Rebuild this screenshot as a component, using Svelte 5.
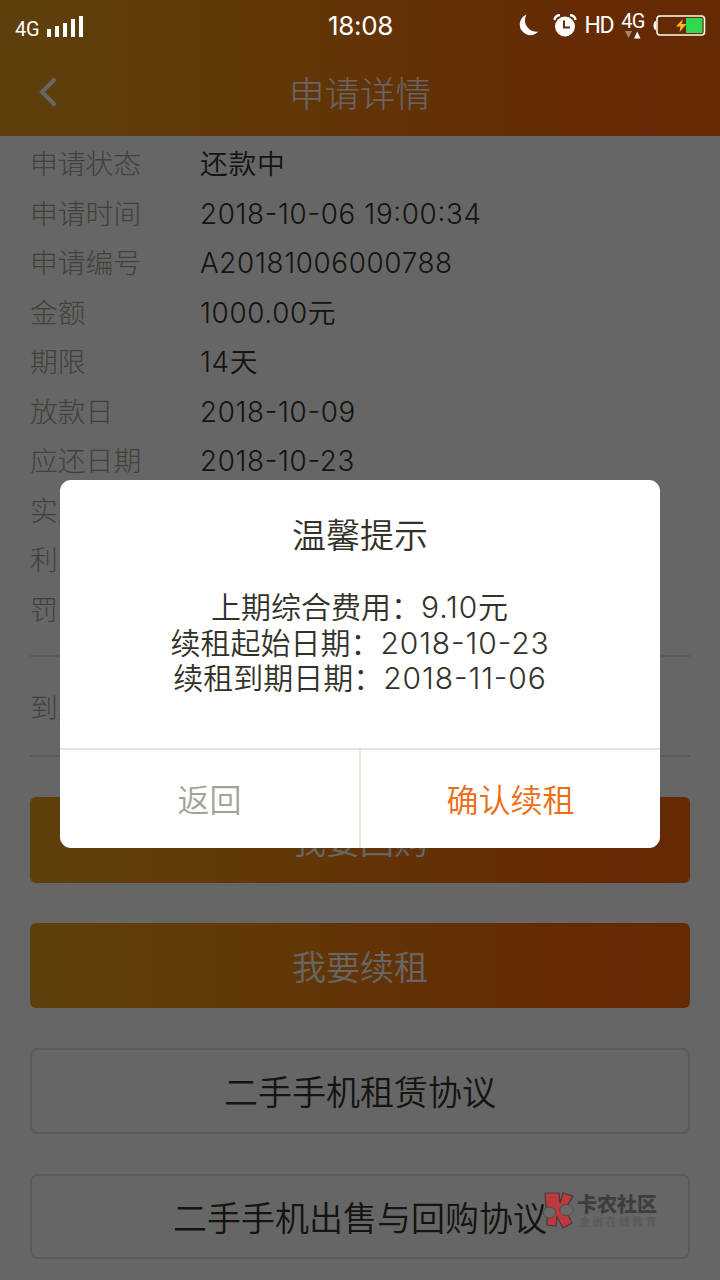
<script lang="ts">
	const rows = [
		{ label: '申请状态', value: '还款中' },
		{ label: '申请时间', value: '2018-10-06 19:00:34' },
		{ label: '申请编号', value: 'A20181006000788' },
		{ label: '金额', value: '1000.00元' },
		{ label: '期限', value: '14天' },
		{ label: '放款日', value: '2018-10-09' },
		{ label: '应还日期', value: '2018-10-23' },
		{ label: '实还日期', value: '' },
		{ label: '利息', value: '' },
		{ label: '罚息', value: '' }
	];

	const messages = [
		{ label: '上期综合费用：', value: '9.10元' },
		{ label: '续租起始日期：', value: '2018-10-23' },
		{ label: '续租到期日期：', value: '2018-11-06' }
	];

	const signalBars = [8, 11, 14, 18, 21];

	let open = $state(true);
</script>

<div class="screen">
	<div class="status-bar">
		<div class="status-left">
			<span class="network">4G</span>
			<svg class="signal" width="37" height="22" viewBox="0 0 37 22">
				{#each signalBars as height, i}
					<rect x={i * 8} y={22 - height} width="4" {height} fill="#fff" />
				{/each}
			</svg>
		</div>
		<div class="clock">18:08</div>
		<div class="status-right">
			<svg width="20" height="22" viewBox="0 0 20 22">
				<path d="M7.500 .5A10.700 10.700 0 1 0 19.500 17.500A11.500 11.500 0 0 1 7.500 .5Z" fill="#fff" />
			</svg>
			<svg class="alarm" width="24" height="23" viewBox="0 0 24 23">
				<circle cx="12" cy="12.500" r="10" fill="#fff" />
				<path d="M1.500 6Q2 1.500 7 1M22.500 6Q22 1.500 17 1" fill="none" stroke="#fff" stroke-width="2.400" />
				<path d="M11 6.500V13.500H17" fill="none" stroke="#642b06" stroke-width="2" />
			</svg>
			<span class="hd">HD</span>
			<div class="data">
				<span>4G</span>
				<svg width="16" height="8" viewBox="0 0 16 8">
					<path d="M0 0H7L3.500 7Z" fill="#a28878" />
					<path d="M9 7.500H15.500L12.200 .5Z" fill="#fff" />
				</svg>
			</div>
			<svg class="battery" width="53" height="21" viewBox="0 0 53 21">
				<path d="M3 6Q0.500 6 .5 10.500T3 15Z" fill="#fff" />
				<rect x="4" y="1" width="47.500" height="19" rx="3" fill="none" stroke="#fffbe8" stroke-width="1.600" />
				<rect x="33" y="3" width="16.500" height="15" fill="#31d651" />
				<path d="M30 4L23 11.500H27.500L26.500 17L33.500 9H28.500Z" fill="#ffb726" />
			</svg>
		</div>
	</div>

	<header>
		<svg class="back" width="20" height="30" viewBox="0 0 20 30">
			<path d="M16 3L4 15L16 27" fill="none" stroke="#fff" stroke-width="4" stroke-linecap="round" />
		</svg>
		<h1>申请详情</h1>
	</header>

	<main>
		<div class="details">
			{#each rows as row}
				<div class="row">
					<span class="label">{row.label}</span>
					<span class="value">{row.value}</span>
				</div>
			{/each}
		</div>
		<div class="row account">
			<span class="label">到账银行</span>
		</div>
		<div class="actions">
			<button class="primary">我要回购</button>
			<button class="primary" onclick={() => (open = true)}>我要续租</button>
			<button class="plain">二手手机租赁协议</button>
			<button class="plain">二手手机出售与回购协议</button>
		</div>
	</main>

	{#if open}
		<div class="mask">
			<div class="dialog">
				<h2>温馨提示</h2>
				<div class="message">
					{#each messages as line}
						<p>{line.label}<span>{line.value}</span></p>
					{/each}
				</div>
				<div class="dialog-buttons">
					<button class="cancel" onclick={() => (open = false)}>返回</button>
					<button class="confirm" onclick={() => (open = false)}>确认续租</button>
				</div>
			</div>
		</div>
	{/if}

	<div class="watermark">
		<svg width="32" height="37" viewBox="0 0 32 37">
			<path
				d="M2 1H16L17 11L20 1L30 4L22 17L29 31L20 36L14 25L13 34L4 33V22L3 14Z"
				fill="#bd383f"
				stroke="#403c3d"
				stroke-width="1.200"
			/>
			<g fill="#6a6a6a" stroke="#444" stroke-width=".7">
				<ellipse cx="6.500" cy="20.500" rx="6" ry="5.500" />
				<ellipse cx="23.500" cy="18" rx="6.800" ry="5.500" />
			</g>
		</svg>
		<div class="watermark-text">
			<strong>卡农社区</strong>
			<small>金融在线教育</small>
		</div>
	</div>
</div>

<style>
	:global(body) {
		margin: 0;
	}

	.screen {
		position: relative;
		width: 720px;
		height: 1280px;
		overflow: hidden;
		background: #fff;
		color: #32322b;
		font-family: Inter, 'Noto Sans CJK SC', sans-serif;
		font-weight: 350;
	}

	button {
		display: block;
		padding: 0;
		border: 0;
		background: none;
		font-family: inherit;
		font-weight: inherit;
	}

	/* stays bright above the mask */
	.status-bar {
		position: absolute;
		z-index: 3;
		top: 0;
		left: 0;
		display: grid;
		grid-template-columns: 1fr auto 1fr;
		align-items: center;
		width: 720px;
		height: 50px;
		box-sizing: border-box;
		padding: 0 14px 0 15px;
		color: #fff;
		font-weight: 400;
	}

	.status-left,
	.status-right {
		display: flex;
		align-items: center;
	}

	.status-left {
		gap: 8px;
	}

	.network {
		padding-top: 8px;
		font-family: Roboto, sans-serif;
		font-size: 20px;
		line-height: 22px;
		letter-spacing: -0.3px;
	}

	.signal {
		padding-top: 2px;
	}

	.clock {
		font-size: 26px;
		letter-spacing: -0.3px;
	}

	.status-right {
		justify-content: flex-end;
		height: 48px;
	}

	.alarm {
		margin-left: 14px;
	}

	.hd {
		margin: 0 8px 0 8px;
		font-family: Roboto, sans-serif;
		font-size: 23px;
		letter-spacing: -1.500px;
	}

	.data {
		display: flex;
		flex-direction: column;
		align-items: center;
		margin-right: 8px;
		padding-top: 1px;
		font-family: Roboto, sans-serif;
		font-size: 20px;
		line-height: 19px;
		letter-spacing: -0.5px;
	}

	header {
		display: flex;
		align-items: center;
		height: 86px;
		padding: 50px 37px 0 38px;
		background: linear-gradient(90deg, #eba01e 0%, #f58b14 38%, #fa6b0e 80%, #fa690c);
		color: #fff;
	}

	.back {
		margin-bottom: 2px;
	}

	h1,
	h2,
	p {
		margin: 0;
		font-weight: inherit;
	}

	h1 {
		flex: 1;
		margin-right: 21px;
		padding-top: 3px;
		font-size: 35.500px;
		font-weight: 300;
		line-height: 50px;
		text-align: center;
	}

	main {
		padding: 3px 30px 0;
	}

	.details {
		padding-bottom: 21px;
		border-bottom: 2px solid #e3e3d8;
	}

	.row {
		display: flex;
		align-items: baseline;
		height: 49.500px;
		font-size: 27.800px;
		line-height: 50px;
	}

	.label {
		width: 170px;
		color: #a3a395;
		font-weight: 300;
	}

	.value {
		color: #32322b;
		letter-spacing: 0.65px;
		font-feature-settings: 'case';
	}

	.account {
		height: 98px;
		border-bottom: 2px solid #e3e3d8;
		line-height: 102px;
	}

	.actions {
		display: flex;
		flex-direction: column;
		gap: 40px;
		padding-top: 40px;
	}

	.actions button {
		height: 85.500px;
		border-radius: 6px;
		font-size: 34px;
	}

	.actions .primary {
		background: linear-gradient(90deg, #eba01e 0%, #f58b14 38%, #fa6b0e 80%, #fa690c);
		color: #fff;
	}

	.actions .plain {
		border: 2px solid #e3e3d8;
		border-radius: 8px;
		color: #32322b;
	}

	.mask {
		position: absolute;
		z-index: 2;
		inset: 0;
		display: flex;
		justify-content: center;
		align-items: flex-start;
		padding-top: 480px;
		background: rgba(0, 0, 0, 0.6);
	}

	.dialog {
		width: 600px;
		height: 367.500px;
		border-radius: 11px;
		background: #fff;
		display: flex;
		flex-direction: column;
		overflow: hidden;
		text-align: center;
	}

	h2 {
		padding-top: 31px;
		font-size: 34px;
		line-height: 50px;
	}

	.message {
		flex: 1;
		padding-top: 29px;
		font-size: 30px;
		line-height: 35.500px;
	}

	.message span {
		letter-spacing: 0.9px;
		font-feature-settings: 'case';
	}

	.dialog-buttons {
		display: flex;
		height: 97.500px;
		border-top: 2px solid #e6e6dc;
	}

	.dialog-buttons button {
		flex: 1;
		padding-bottom: 2px;
		font-size: 32px;
	}

	.dialog-buttons .cancel {
		border-right: 2px solid #e6e6dc;
		color: #a3a395;
	}

	.dialog-buttons .confirm {
		color: #eb6d14;
	}

	.watermark {
		position: absolute;
		z-index: 4;
		top: 1192px;
		left: 543px;
		display: flex;
		gap: 2px;
	}

	.watermark-text {
		display: flex;
		flex-direction: column;
		font-family: 'Noto Sans CJK SC', sans-serif;
	}

	strong {
		color: #3d3d3d;
		font-size: 20px;
		font-weight: 900;
		line-height: 23px;
	}

	small {
		padding-left: 2px;
		color: #5b5b5b;
		font-size: 11px;
		font-weight: 700;
		letter-spacing: 2.300px;
		line-height: 12px;
	}
</style>
